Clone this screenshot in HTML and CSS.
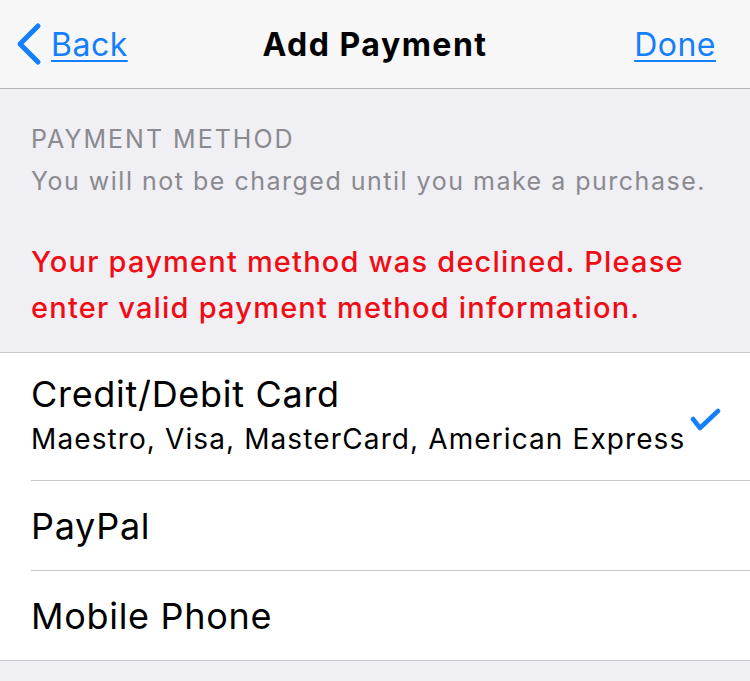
FILE: index.html
```html
<!DOCTYPE html>
<html lang="en">
<head>
    <meta charset="UTF-8">
    <meta name="viewport" content="width=device-width, initial-scale=1.0">
    <title>Add Payment</title>
    <link rel="stylesheet" href="styles.css">
</head>
<body>
    <header class="navbar">
        <a class="nav-link back" href="#">
            <svg class="chevron" width="28" height="44" viewBox="0 0 28 44">
                <path d="M23 4 L5 22 L23 40" fill="none" stroke="#147efb" stroke-width="5" stroke-linecap="round" stroke-linejoin="round"/>
            </svg>
            <span>Back</span>
        </a>
        <h1 class="title">Add Payment</h1>
        <a class="nav-link done" href="#">Done</a>
    </header>

    <section class="intro">
        <div class="caption">PAYMENT METHOD</div>
        <div class="hint">You will not be charged until you make a purchase.</div>
        <p class="error">Your payment method was declined. Please enter valid payment method information.</p>
    </section>

    <ul class="methods">
        <li class="method selected">
            <div class="method-text">
                <div class="method-name">Credit/Debit Card</div>
                <div class="method-sub">Maestro, Visa, MasterCard, American Express</div>
            </div>
            <svg class="check" width="32" height="26" viewBox="0 0 32 26">
                <path d="M3 12 L10 21 L28 4" fill="none" stroke="#147efb" stroke-width="4.5" stroke-linecap="round" stroke-linejoin="round"/>
            </svg>
        </li>
        <li class="method">
            <div class="method-name">PayPal</div>
        </li>
        <li class="method">
            <div class="method-name">Mobile Phone</div>
        </li>
    </ul>

    <div class="footer-gap"></div>
</body>
</html>
```

FILE: styles.css
```css
body {
    margin: 0;
    font-family: Inter, Roboto, "Liberation Sans", sans-serif;
    background-color: #efeff4;
    color: #000;
}
.navbar {
    height: 88px;
    display: flex;
    align-items: center;
    justify-content: space-between;
    padding: 0 34px 0 15px;
    background-color: #f7f7f8;
    border-bottom: 1px solid #b4b4b6;
    position: relative;
}
.nav-link {
    color: #147efb;
    font-size: 32px;
    letter-spacing: 0.5px;
    text-decoration: underline;
    text-decoration-thickness: 2px;
    text-underline-offset: 4px;
    display: flex;
    align-items: center;
}
.back span {
    margin-left: 8px;
}
.chevron {
    display: block;
}
.title {
    position: absolute;
    left: 0;
    right: 0;
    text-align: center;
    margin: 0;
    font-size: 32px;
    font-weight: 700;
    letter-spacing: 1.5px;
    pointer-events: none;
}
.intro {
    padding: 33px 31px 21px;
}
.caption {
    font-size: 25px;
    line-height: 34px;
    letter-spacing: 2px;
    color: #8a8a8f;
}
.hint {
    font-size: 25px;
    line-height: 50px;
    letter-spacing: 1.5px;
    color: #8a8a8f;
}
.error {
    margin: 33px 0 0;
    font-size: 29px;
    line-height: 46px;
    letter-spacing: 1.2px;
    color: #f00c14;
    font-weight: 500;
}
.methods {
    list-style: none;
    margin: 0;
    padding: 0;
    background-color: #fff;
    border-top: 1px solid #c8c7cc;
    border-bottom: 1px solid #c8c7cc;
}
.method {
    display: flex;
    align-items: center;
    justify-content: space-between;
    height: 89px;
    margin-left: 31px;
    padding-right: 28px;
    border-bottom: 1px solid #c8c7cc;
}
.method:last-child {
    border-bottom: none;
}
.method.selected {
    height: 127px;
}
.method-name {
    font-size: 36px;
    line-height: 44px;
    letter-spacing: 0.7px;
}
.method-sub {
    font-size: 28px;
    line-height: 46px;
    letter-spacing: 1.1px;
}
.check {
    margin-top: 6px;
}
.footer-gap {
    height: 20px;
    border-bottom: 1px solid #c8c7cc;
}
```
